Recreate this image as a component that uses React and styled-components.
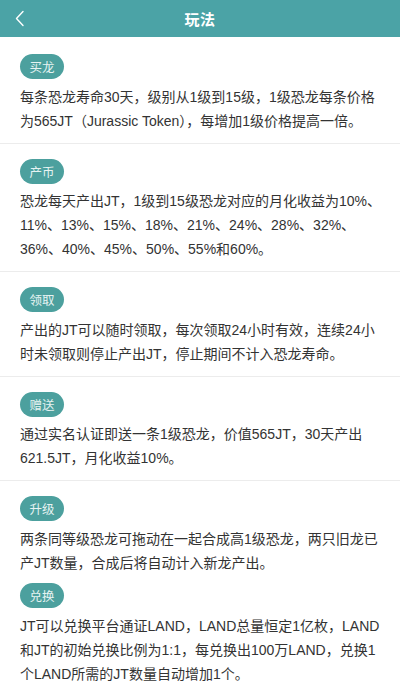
import React from "react";
import styled, { createGlobalStyle } from "styled-components";

const GlobalStyle = createGlobalStyle`
  html, body {
    margin: 0;
    padding: 0;
    background: #ffffff;
  }
  body {
    font-family: "Liberation Sans", "Noto Sans CJK SC", sans-serif;
    color: #333;
  }
`;

const Page = styled.div`
  width: 400px;
  min-height: 684px;
  background: #fff;
`;

const TopBar = styled.div`
  height: 37px;
  background: #4ba3a6;
  display: flex;
  align-items: center;
  justify-content: center;
  position: relative;
`;

const BackBtn = styled.div`
  position: absolute;
  left: 14px;
  top: 10px;
  width: 12px;
  height: 17px;
  display: flex;
`;

const Title = styled.div`
  color: #fff;
  font-size: 15px;
  font-weight: bold;
  letter-spacing: 0.5px;
`;

const Section = styled.div`
  padding: ${(p) => p.$top}px 17px ${(p) => (p.$joined ? 0 : 10)}px 20px;
  border-bottom: ${(p) => (p.$joined ? "none" : "1px solid #ececec")};
`;

const Tag = styled.div`
  display: inline-flex;
  align-items: center;
  justify-content: center;
  width: 44px;
  height: 25px;
  border-radius: 13px;
  background: #4ca09e;
  color: #e6f3f2;
  font-size: 12.5px;
  margin-bottom: 5.5px;
`;

const Text = styled.p`
  margin: 0;
  font-size: 14px;
  line-height: 24px;
  color: #333;
`;

const sections = [
  {
    tag: "买龙",
    text: "每条恐龙寿命30天，级别从1级到15级，1级恐龙每条价格为565JT（Jurassic Token），每增加1级价格提高一倍。",
  },
  {
    tag: "产币",
    text: "恐龙每天产出JT，1级到15级恐龙对应的月化收益为10%、11%、13%、15%、18%、21%、24%、28%、32%、36%、40%、45%、50%、55%和60%。",
  },
  {
    tag: "领取",
    text: "产出的JT可以随时领取，每次领取24小时有效，连续24小时未领取则停止产出JT，停止期间不计入恐龙寿命。",
  },
  {
    tag: "赠送",
    text: "通过实名认证即送一条1级恐龙，价值565JT，30天产出621.5JT，月化收益10%。",
  },
  {
    tag: "升级",
    text: "两条同等级恐龙可拖动在一起合成高1级恐龙，两只旧龙已产JT数量，合成后将自动计入新龙产出。",
    joined: true,
  },
  {
    tag: "兑换",
    text: "JT可以兑换平台通证LAND，LAND总量恒定1亿枚，LAND和JT的初始兑换比例为1:1，每兑换出100万LAND，兑换1个LAND所需的JT数量自动增加1个。",
  },
];

export default function App() {
  return (
    <Page>
      <GlobalStyle />
      <TopBar>
        <BackBtn>
          <svg width="12" height="17" viewBox="0 0 12 17">
            <path
              d="M9 1.5 L2.5 8.5 L9 15.5"
              fill="none"
              stroke="#fff"
              strokeWidth="1.4"
              strokeLinecap="round"
              strokeLinejoin="round"
            />
          </svg>
        </BackBtn>
        <Title>玩法</Title>
      </TopBar>
      {sections.map((s, i) => (
        <Section
          key={s.tag}
          $top={i === 0 ? 17 : sections[i - 1].joined ? 8.5 : 15}
          $joined={s.joined}
        >
          <Tag>{s.tag}</Tag>
          <Text>{s.text}</Text>
        </Section>
      ))}
    </Page>
  );
}
